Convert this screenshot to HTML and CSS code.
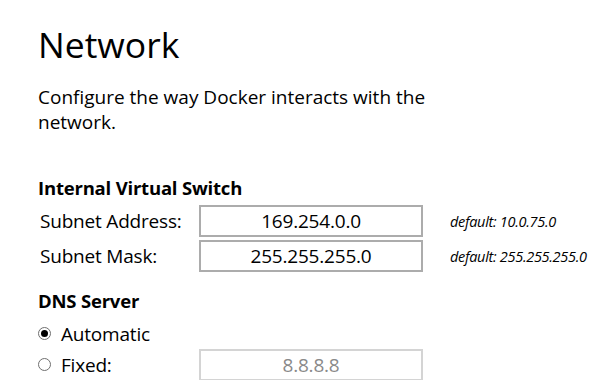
FILE: index.html
```html
<!DOCTYPE html>
<html lang="en">
<head>
    <meta charset="UTF-8">
    <title>Network</title>
    <link rel="stylesheet" href="styles.css">
</head>
<body>
    <div class="settings-page">
        <!-- Page title and description -->
        <h1 class="page-title">Network</h1>
        <p class="page-desc">Configure the way Docker interacts with the network.</p>

        <!-- Internal virtual switch -->
        <h2 class="section-title">Internal Virtual Switch</h2>
        <div class="field-row">
            <label class="field-label" for="subnetAddress">Subnet Address:</label>
            <input id="subnetAddress" class="field-input" type="text" value="169.254.0.0">
            <span class="field-default">default: 10.0.75.0</span>
        </div>
        <div class="field-row">
            <label class="field-label" for="subnetMask">Subnet Mask:</label>
            <input id="subnetMask" class="field-input" type="text" value="255.255.255.0">
            <span class="field-default">default: 255.255.255.0</span>
        </div>

        <!-- DNS server -->
        <h2 class="section-title dns-title">DNS Server</h2>
        <div class="radio-row">
            <label class="radio-label"><input type="radio" name="dns" checked> Automatic</label>
        </div>
        <div class="radio-row">
            <label class="radio-label field-label"><input type="radio" name="dns"> Fixed:</label>
            <input class="field-input" type="text" value="8.8.8.8" disabled>
        </div>
    </div>
</body>
</html>
```

FILE: styles.css
```css
body {
    margin: 0;
    background-color: white;
    font-family: 'Open Sans', 'Noto Sans', sans-serif;
    color: #000;
}

.settings-page {
    padding: 16px 0 0 38px;
}

.page-title {
    font-size: 35.5px;
    font-weight: 400;
    margin: 0;
    line-height: 56px;
}

.page-desc {
    font-size: 19px;
    line-height: 25px;
    width: 420px;
    margin: 13px 0 0 0;
}

.section-title {
    font-size: 18.5px;
    font-weight: 700;
    margin: 41px 0 5px 0;
    line-height: 24px;
    letter-spacing: -0.2px;
}

.dns-title {
    margin-top: 17px;
    margin-bottom: 5px;
}

.field-row {
    display: flex;
    align-items: center;
    margin-bottom: 3px;
}

.field-label {
    width: 159px;
    padding-left: 2px;
    font-size: 19px;
    line-height: 24px;
    letter-spacing: -0.2px;
}

.field-input {
    width: 224px;
    height: 32px;
    box-sizing: border-box;
    border: 2px solid #acacac;
    font-family: inherit;
    font-size: 19px;
    text-align: center;
    padding: 0;
    color: #000;
    background: white;
    letter-spacing: -0.2px;
}

.field-input:disabled {
    border-color: #d4d4d4;
    color: #8a8a8a;
}

.field-default {
    margin-left: 27px;
    font-size: 14.5px;
    font-style: italic;
    letter-spacing: -0.3px;
}

.radio-row {
    display: flex;
    align-items: center;
    height: 31px;
}

.radio-label {
    display: flex;
    align-items: center;
    font-size: 19px;
    line-height: 24px;
    letter-spacing: -0.2px;
}

.radio-row .field-label {
    padding-left: 0;
    width: 161px;
}

/* Flat radio: grey ring, black dot */
.radio-label input {
    appearance: none;
    margin: 0 10px 0 0;
    width: 13px;
    height: 13px;
    border: 1px solid #6f6f6f;
    border-radius: 50%;
    box-sizing: border-box;
    display: flex;
    align-items: center;
    justify-content: center;
    background: white;
}

.radio-label input:checked::after {
    content: "";
    width: 7px;
    height: 7px;
    border-radius: 50%;
    background: #000;
}
```
